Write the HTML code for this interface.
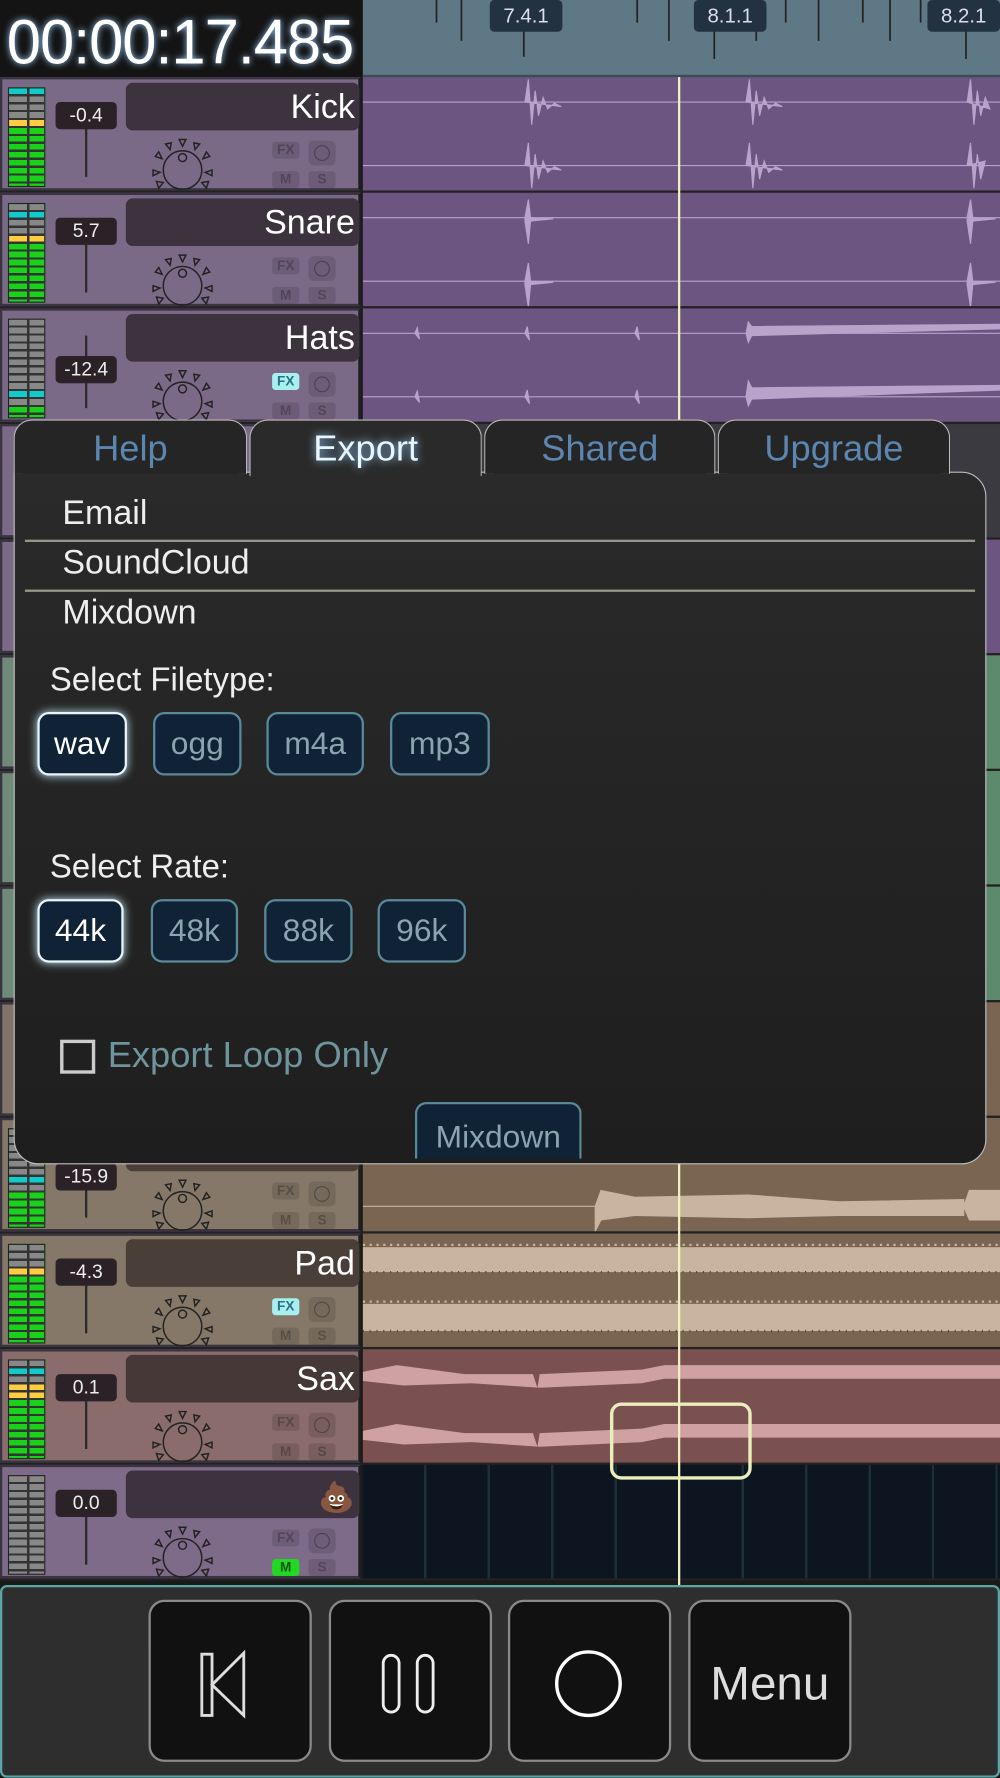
<!DOCTYPE html>
<html><head><meta charset="utf-8"><style>
*{box-sizing:border-box;margin:0;padding:0}
html,body{width:1000px;height:1778px;overflow:hidden;background:#111;font-family:"Liberation Sans",sans-serif}
#s{position:absolute;left:0;top:0;width:882px;height:1568px;transform:scale(1.13379);transform-origin:0 0;overflow:hidden;background:#1a1a1a}
.a{position:absolute}
.tr{position:absolute;left:0;width:882px;height:102px;border-bottom:2px solid #222}
.st{position:absolute;left:0;top:0;width:318px;height:100px;border:2px solid #3a3340;border-right:2px solid #1e1e1e}
.ln{position:absolute;left:320px;top:0;width:562px;height:100px}
.mt{position:absolute;left:5px;top:7px;width:33px;height:88px;background:#333;border:1px solid #222;
background-image:repeating-linear-gradient(to bottom,transparent 0 5px,#333 5px 7px),linear-gradient(to right,transparent 16px,#333 16px 18px,transparent 18px)}
.val{position:absolute;left:47px;top:20px;width:54px;height:24px;background:#2a2226;border-radius:4px;color:#eee;font-size:17px;text-align:center;line-height:24px}
.fd{position:absolute;left:73px;top:22px;width:2px;height:64px;background:#2a2a2a}
.nm{position:absolute;left:109px;top:3px;width:206px;height:42px;background:#3c333f;border-radius:6px;color:#fff;font-size:30px;text-align:right;padding-right:4px;line-height:44px}
.kb{position:absolute;left:131px;top:52px;width:56px;height:50px}
.bt{position:absolute;width:24px;height:15px;border-radius:3px;background:rgba(0,0,0,.12);color:rgba(0,0,0,.25);font-size:12px;font-weight:bold;text-align:center;line-height:15px}
.rc{position:absolute;left:270px;top:54px;width:24px;height:22px;border-radius:5px;background:rgba(0,0,0,.12)}
.rc:after{content:"";position:absolute;left:5px;top:4px;width:12px;height:12px;border:1.5px solid rgba(0,0,0,.3);border-radius:50%}
.tab{position:absolute;top:370px;height:48px;border:1.5px solid #bbb;border-bottom:none;border-radius:16px 16px 0 0;background:#252525;color:#5a86b0;font-size:32px;text-align:center;line-height:48px}
.it{position:absolute;left:55px;color:#eee;font-size:30px}
.hr{position:absolute;left:22px;width:838px;height:2px;background:#9a9a88}
.fb{position:absolute;height:56px;border:2px solid #5a8a98;border-radius:10px;background:#0f2236;color:#8aa4b0;font-size:28px;text-align:center;line-height:52px}
.fb.on{border-color:#e8f4f8;color:#fff;box-shadow:0 0 8px #bfe4f4}
.tb{position:absolute;top:1411px;width:144px;height:143px;border:2px solid #8a8a8a;border-radius:14px;background:#111}
</style></head><body><div id="s">

<!-- header -->
<div class="a" style="left:0;top:0;width:320px;height:68px;background:#141414"></div>
<div class="a" style="left:6px;top:4px;color:#fff;font-size:56px;letter-spacing:-1px;transform:scaleX(.97);transform-origin:0 0;text-shadow:0 0 6px #9cf;white-space:nowrap">00:00:17.485</div>
<div class="a" style="left:320px;top:0;width:562px;height:68px;background:#5f7886;border-bottom:2px solid #3c4c56"></div>
<svg class="a" style="left:320px;top:0" width="562" height="68">
<g stroke="#222" stroke-width="1.5">
<line x1="65" y1="0" x2="65" y2="20"/><line x1="87" y1="0" x2="87" y2="36"/><line x1="115" y1="0" x2="115" y2="20"/>
<line x1="242" y1="0" x2="242" y2="20"/><line x1="270" y1="0" x2="270" y2="36"/><line x1="298" y1="0" x2="298" y2="20"/>
<line x1="347" y1="0" x2="347" y2="36"/><line x1="373" y1="0" x2="373" y2="20"/><line x1="402" y1="0" x2="402" y2="36"/>
<line x1="441" y1="0" x2="441" y2="20"/><line x1="465" y1="0" x2="465" y2="36"/><line x1="492" y1="0" x2="492" y2="20"/>
<line x1="142" y1="0" x2="142" y2="50"/><line x1="310" y1="20" x2="310" y2="52"/><line x1="532" y1="20" x2="532" y2="52"/>
</g>
<rect x="112" y="0" width="64" height="28" rx="4" fill="#223240"/><text x="144" y="20" fill="#dde" font-size="18" text-anchor="middle" font-family="Liberation Sans">7.4.1</text>
<rect x="292" y="0" width="64" height="28" rx="4" fill="#223240"/><text x="324" y="20" fill="#dde" font-size="18" text-anchor="middle" font-family="Liberation Sans">8.1.1</text>
<rect x="498" y="0" width="64" height="28" rx="4" fill="#223240"/><text x="530" y="20" fill="#dde" font-size="18" text-anchor="middle" font-family="Liberation Sans">8.2.1</text>
</svg>

<svg width="0" height="0" style="position:absolute"><defs><g id="k" fill="none" stroke="#222" stroke-width="1.3"><circle cx="28" cy="28" r="17"/><circle cx="28" cy="17" r="3.5"/><path d="M25 1l3 6 3-6z M13 5l4 5 1-6z M43 5l-4 5-1-6z M4 16l6 2-3-6z M52 16l-6 2 3-6z M2 28l6 2-6 3z M54 28l-6 2 6 3z M7 44l4-5-6-1z M49 44l-4-5 6-1z"/></g></defs></svg>

<!-- tracks -->
<div class="tr" style="top:68px"><div class="st" style="background:#7b6988"><div class="mt" style="background-color:#1bd21b;background-image:repeating-linear-gradient(to bottom,transparent 0 5px,#333 5px 7px),linear-gradient(to right,transparent 16px,#333 16px 18px,transparent 18px),linear-gradient(#1cc 0 5px,#888 5px 28px,#fc4 28px 33px,#1bd21b 33px)"></div><div class="fd"></div><div class="val">-0.4</div><div class="nm">Kick</div><svg class="kb"><use href="#k"/></svg><div class="bt" style="left:238px;top:55px">FX</div><div class="rc"></div><div class="bt" style="left:238px;top:81px">M</div><div class="bt" style="left:270px;top:81px">S</div></div>
<div class="ln" style="background:#6c5580"><svg width="562" height="100"><g stroke="#b9a3cb" fill="#b9a3cb"><line x1="0" y1="22" x2="562" y2="22"/><line x1="0" y1="78" x2="562" y2="78"/><path d="M143 22l3-20 3 40 3-30 3 22 4-16 4 10 6-5 6 3zM338 22l3-20 3 40 3-30 3 22 4-16 4 10 6-5 6 3zM533 22l3-20 3 40 3-30 3 22 4-16 4 10zM143 78l3-20 3 40 3-30 3 22 4-16 4 10 6-5 6 3zM338 78l3-20 3 40 3-30 3 22 4-16 4 10 6-5 6 3zM533 78l3-20 3 40 3-30 3 22 4-16z"/></g></svg></div></div>

<div class="tr" style="top:170px"><div class="st" style="background:#7b6988"><div class="mt" style="background-color:#1bd21b;background-image:repeating-linear-gradient(to bottom,transparent 0 5px,#333 5px 7px),linear-gradient(to right,transparent 16px,#333 16px 18px,transparent 18px),linear-gradient(#888 0 7px,#1cc 7px 12px,#888 12px 28px,#fc4 28px 33px,#1bd21b 33px)"></div><div class="fd"></div><div class="val">5.7</div><div class="nm">Snare</div><svg class="kb"><use href="#k"/></svg><div class="bt" style="left:238px;top:55px">FX</div><div class="rc"></div><div class="bt" style="left:238px;top:81px">M</div><div class="bt" style="left:270px;top:81px">S</div></div>
<div class="ln" style="background:#6c5580"><svg width="562" height="100"><g stroke="#b9a3cb" fill="#b9a3cb"><line x1="0" y1="22" x2="562" y2="22"/><line x1="0" y1="78" x2="562" y2="78"/><path d="M143 22l3-16 2 16 20 1-20 2-2 20-3-20zM533 22l3-16 2 16 20 1-20 2-2 20-3-20zM143 78l3-16 2 16 20 1-20 2-2 20-3-20zM533 78l3-16 2 16 20 1-20 2-2 20-3-20z"/></g></svg></div></div>

<div class="tr" style="top:272px"><div class="st" style="background:#7b6988"><div class="mt" style="background-color:#888;background-image:repeating-linear-gradient(to bottom,transparent 0 5px,#333 5px 7px),linear-gradient(to right,transparent 16px,#333 16px 18px,transparent 18px),linear-gradient(#888 0 63px,#1cc 63px 70px,#888 70px 77px,#1bd21b 77px)"></div><div class="fd"></div><div class="val" style="top:40px">-12.4</div><div class="nm">Hats</div><svg class="kb"><use href="#k"/></svg><div class="bt" style="left:238px;top:55px;background:#a8f0f0;color:#2a7080">FX</div><div class="rc"></div><div class="bt" style="left:238px;top:81px">M</div><div class="bt" style="left:270px;top:81px">S</div></div>
<div class="ln" style="background:#6c5580"><svg width="562" height="100"><g stroke="#b9a3cb" fill="#b9a3cb"><line x1="0" y1="22" x2="562" y2="22"/><line x1="0" y1="78" x2="562" y2="78"/><path d="M46 22l2-5 2 10zM143 22l2-6 2 12zM240 22l2-6 2 12zM338 22l2-10 3 4 219-2 0 4-219 6-3 6zM46 78l2-5 2 10zM143 78l2-6 2 12zM240 78l2-6 2 12zM338 78l2-14 3 6 219-2 0 4-219 8-3 6z"/></g></svg></div></div>

<div class="tr" style="top:374px;background:#3a3a40"><div class="st" style="background:#7b6988"></div></div>
<div class="tr" style="top:476px;background:#3a3a40"><div class="st" style="background:#7b6988"></div><div class="ln" style="background:#6c5580"></div></div>
<div class="tr" style="top:578px"><div class="st" style="background:#6f8a76"></div><div class="ln" style="background:#5d8a6c"></div></div>
<div class="tr" style="top:680px"><div class="st" style="background:#6f8a76"></div><div class="ln" style="background:#5d8a6c"></div></div>
<div class="tr" style="top:782px"><div class="st" style="background:#6f8a76"></div><div class="ln" style="background:#5d8a6c"></div></div>
<div class="tr" style="top:884px"><div class="st" style="background:#80746a"></div><div class="ln" style="background:#7a6552"></div></div>

<div class="tr" style="top:986px"><div class="st" style="background:#857868"><div class="mt" style="background-color:#1bd21b;background-image:repeating-linear-gradient(to bottom,transparent 0 5px,#333 5px 7px),linear-gradient(to right,transparent 16px,#333 16px 18px,transparent 18px),linear-gradient(#888 0 42px,#1cc 42px 49px,#888 49px 56px,#1bd21b 56px)"></div><div class="fd"></div><div class="val" style="top:38px">-15.9</div><div class="nm" style="background:#4a3e38"></div><svg class="kb"><use href="#k"/></svg><div class="bt" style="left:238px;top:55px">FX</div><div class="rc"></div><div class="bt" style="left:238px;top:81px">M</div><div class="bt" style="left:270px;top:81px">S</div></div>
<div class="ln" style="background:#7a6552"><svg width="562" height="100"><g stroke="#c9b49f" fill="#c9b49f"><line x1="0" y1="78" x2="210" y2="78"/><path d="M205 78l5-14 30 6 100-2 80 6 110-2 0 14-110 0-80 2-100-2-30 4-5 10zM530 78l5-14 27 0 0 26-27 0z"/></g></svg></div></div>

<div class="tr" style="top:1088px"><div class="st" style="background:#857868"><div class="mt" style="background-color:#1bd21b;background-image:repeating-linear-gradient(to bottom,transparent 0 5px,#333 5px 7px),linear-gradient(to right,transparent 16px,#333 16px 18px,transparent 18px),linear-gradient(#888 0 21px,#fc4 21px 28px,#1bd21b 28px)"></div><div class="fd"></div><div class="val">-4.3</div><div class="nm" style="background:#4a3e38">Pad</div><svg class="kb"><use href="#k"/></svg><div class="bt" style="left:238px;top:55px;background:#a8f0f0;color:#2a7080">FX</div><div class="rc"></div><div class="bt" style="left:238px;top:81px">M</div><div class="bt" style="left:270px;top:81px">S</div></div>
<div class="ln" style="background:#7a6552"><svg width="562" height="100"><g fill="#c9b49f"><rect x="0" y="12" width="562" height="22"/><rect x="0" y="62" width="562" height="24"/></g><g stroke="#5a4838" stroke-width="2" stroke-dasharray="1 5"><line x1="0" y1="34" x2="562" y2="34"/><line x1="0" y1="86" x2="562" y2="86"/></g><g stroke="#c9b49f" stroke-width="2" stroke-dasharray="2 4"><line x1="0" y1="10" x2="562" y2="10"/><line x1="0" y1="60" x2="562" y2="60"/></g></svg></div></div>

<div class="tr" style="top:1190px"><div class="st" style="background:#8a6c6c"><div class="mt" style="background-color:#1bd21b;background-image:repeating-linear-gradient(to bottom,transparent 0 5px,#333 5px 7px),linear-gradient(to right,transparent 16px,#333 16px 18px,transparent 18px),linear-gradient(#888 0 7px,#1cc 7px 12px,#888 12px 21px,#fc4 21px 33px,#1bd21b 33px)"></div><div class="fd"></div><div class="val">0.1</div><div class="nm" style="background:#473838">Sax</div><svg class="kb"><use href="#k"/></svg><div class="bt" style="left:238px;top:55px">FX</div><div class="rc"></div><div class="bt" style="left:238px;top:81px">M</div><div class="bt" style="left:270px;top:81px">S</div></div>
<div class="ln" style="background:#7a5050"><svg width="562" height="100"><g fill="#cfa1a3"><path d="M0 20l30-6 60 8 60 0 4 12 2-12 90-4 20-4 296 0 0 12-296 0-20 4-90 4-60-4-60 2-36-4z"/><path d="M0 72l30-6 60 8 60 0 4 12 2-12 90-4 20-4 296 0 0 12-296 0-20 4-90 4-60-4-60 2-36-4z"/></g></svg></div></div>

<div class="tr" style="top:1292px"><div class="st" style="background:#7e6a89"><div class="mt" style="background-color:#888"></div><div class="fd"></div><div class="val">0.0</div><div class="nm"><span style="font-size:26px;font-family:'Noto Sans CJK JP',sans-serif">💩</span></div><svg class="kb"><use href="#k"/></svg><div class="bt" style="left:238px;top:55px">FX</div><div class="rc"></div><div class="bt" style="left:238px;top:81px;background:#22d822;color:#115511">M</div><div class="bt" style="left:270px;top:81px">S</div></div>
<div class="ln" style="background:#0c1520;background-image:repeating-linear-gradient(to right,transparent 0 54px,#1c3038 54px 56px)"></div></div>

<div class="a" style="left:598px;top:68px;width:2px;height:1330px;background:#f0f0c0"></div>
<div class="a" style="left:538px;top:1237px;width:125px;height:68px;border:3px solid #eaeebb;border-radius:10px"></div>

<div class="a" style="left:0;top:1398px;width:882px;height:170px;background:#2e2e2e;border:2px solid #5aa6a6;border-radius:6px"></div>
<div class="tb" style="left:131px"><svg width="140" height="139"><path d="M45 46h9v54h-9z M54 73l28-28v55z" fill="none" stroke="#ddd" stroke-width="2.5"/></svg></div>
<div class="tb" style="left:290px"><svg width="140" height="139"><rect x="46" y="47" width="14" height="50" rx="7" fill="none" stroke="#eee" stroke-width="2.5"/><rect x="76" y="47" width="14" height="50" rx="7" fill="none" stroke="#eee" stroke-width="2.5"/></svg></div>
<div class="tb" style="left:448px"><svg width="140" height="139"><circle cx="69" cy="72" r="28" fill="none" stroke="#fff" stroke-width="3"/></svg></div>
<div class="tb" style="left:607px;color:#ddd;font-size:42px;text-align:center;line-height:143px">Menu</div>

<div class="a" style="left:12px;top:416px;width:858px;height:611px;background:linear-gradient(#2a2a2a,#1e1e1e);border:1.5px solid #bbb;border-radius:0 22px 22px 22px"></div>
<div class="tab" style="left:12px;width:206px">Help</div>
<div class="tab" style="left:220px;width:205px;color:#e6f6ff;background:#2a2a2a;height:50px;text-shadow:0 0 8px #9cf">Export</div>
<div class="tab" style="left:427px;width:204px">Shared</div>
<div class="tab" style="left:633px;width:205px">Upgrade</div>
<div class="it" style="top:436px">Email</div>
<div class="hr" style="top:476px"></div>
<div class="it" style="top:480px">SoundCloud</div>
<div class="hr" style="top:520px"></div>
<div class="it" style="top:524px">Mixdown</div>
<div class="it" style="left:44px;top:584px;font-size:29px">Select Filetype:</div>
<div class="fb on" style="left:33px;top:628px;width:79px">wav</div>
<div class="fb" style="left:135px;top:628px;width:78px">ogg</div>
<div class="fb" style="left:235px;top:628px;width:86px">m4a</div>
<div class="fb" style="left:344px;top:628px;width:88px">mp3</div>
<div class="it" style="left:44px;top:749px;font-size:29px">Select Rate:</div>
<div class="fb on" style="left:33px;top:793px;width:76px">44k</div>
<div class="fb" style="left:133px;top:793px;width:77px">48k</div>
<div class="fb" style="left:233px;top:793px;width:78px">88k</div>
<div class="fb" style="left:333px;top:793px;width:78px">96k</div>
<div class="a" style="left:53px;top:917px;width:31px;height:30px;border:3px solid #ccc"></div>
<div class="a" style="left:95px;top:912px;color:#6f949c;font-size:32px">Export Loop Only</div>
<div class="a" style="left:366px;top:972px;width:147px;height:50px;border:2px solid #5a8a98;border-bottom:none;border-radius:10px 10px 0 0;background:#0f2236;color:#8aa4b0;font-size:28px;text-align:center;line-height:58px;overflow:hidden">Mixdown</div>
</div></body></html>
